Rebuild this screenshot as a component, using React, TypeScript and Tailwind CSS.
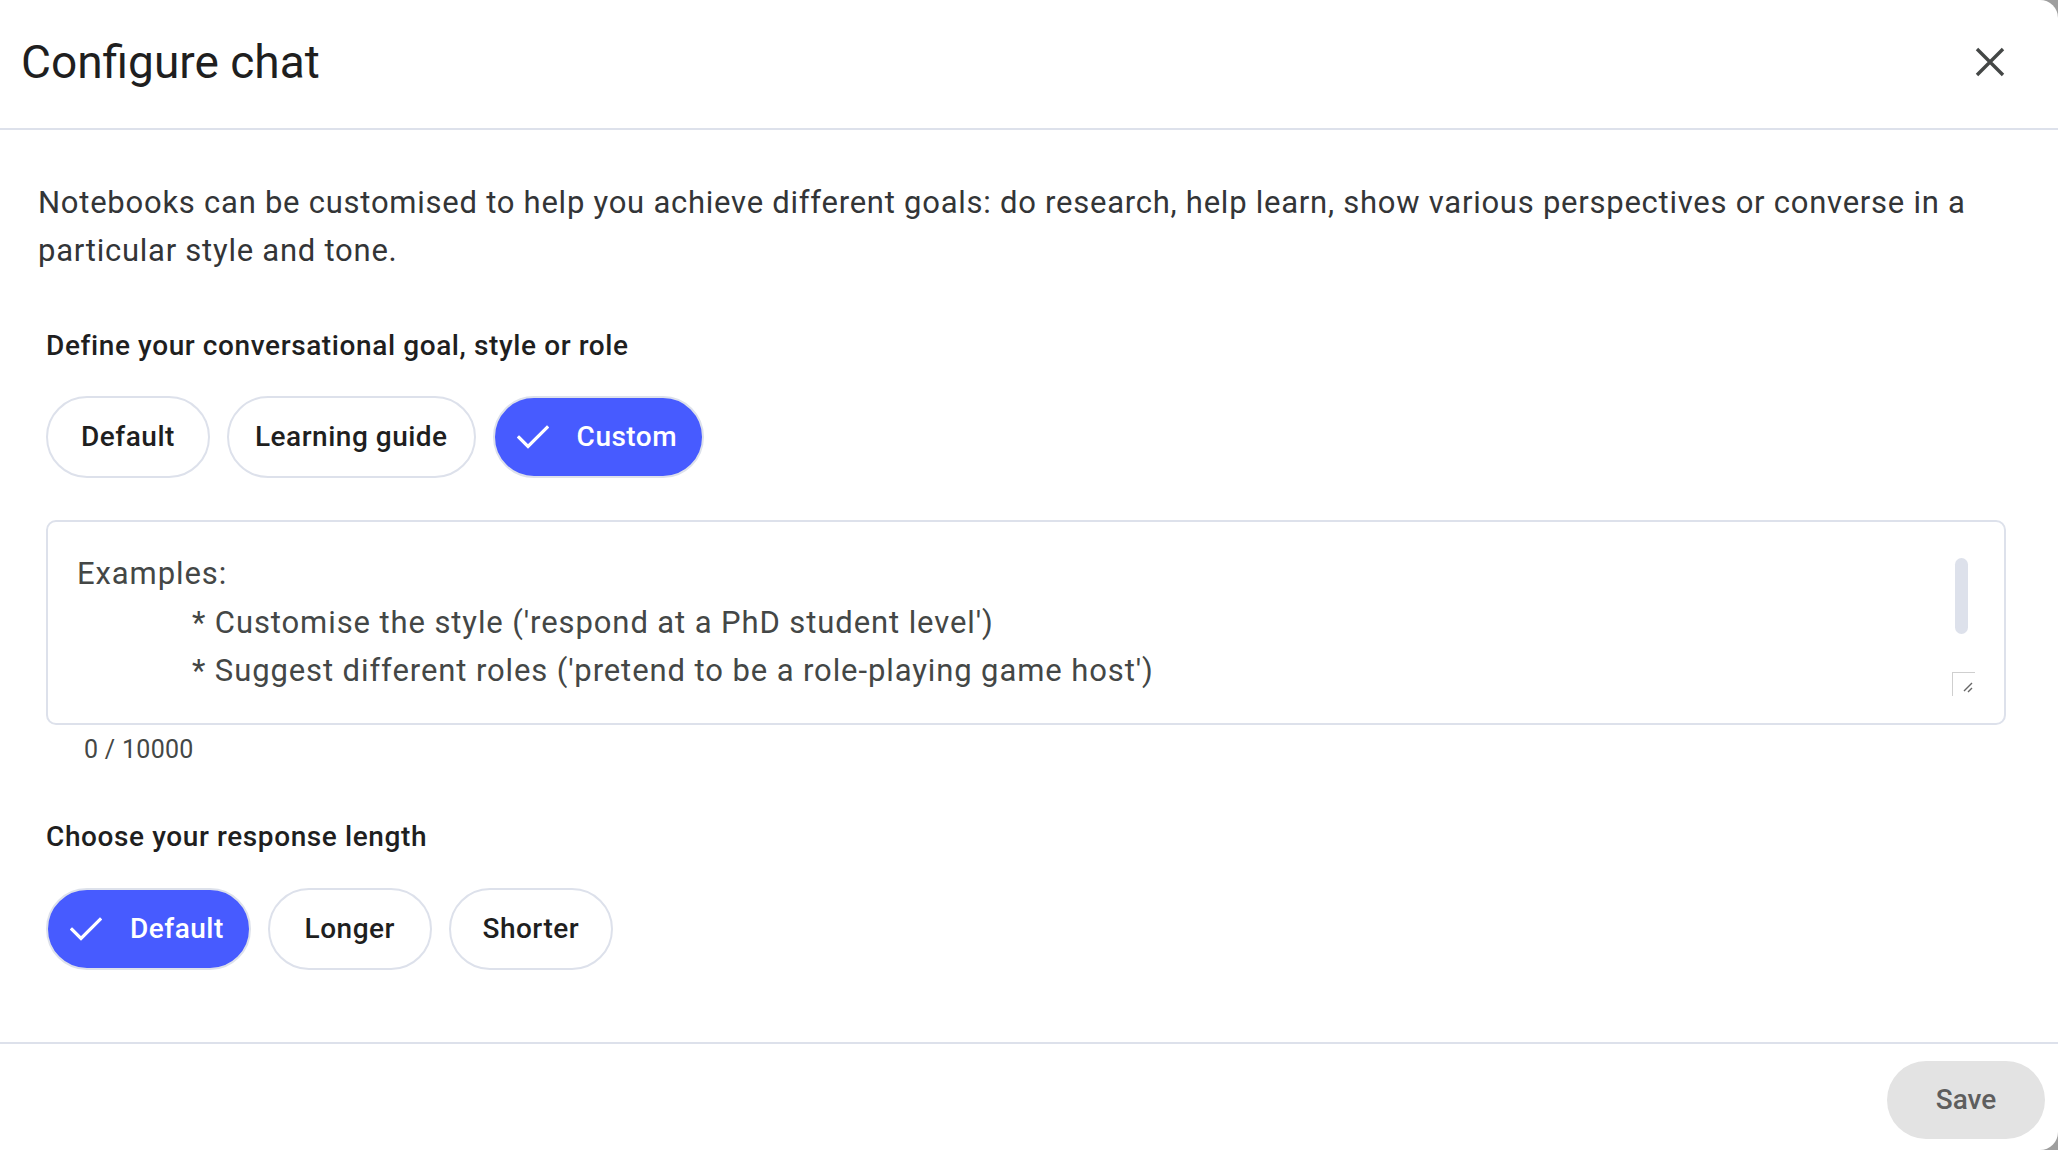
import React from "react";

// Configure chat dialog — full-viewport sheet with two chip groups and a prompt box

function CheckIcon() {
  return (
    <svg width="32" height="24" viewBox="0 0 32 24" fill="none">
      <path d="M2 12.5 L11 21.5 L30 2.5" stroke="white" strokeWidth="3.2" strokeLinecap="square" />
    </svg>
  );
}

function CloseIcon() {
  return (
    <svg width="30" height="30" viewBox="0 0 30 30" fill="none">
      <path d="M2 2 L28 28 M28 2 L2 28" stroke="#444746" strokeWidth="3.4" />
    </svg>
  );
}

interface ChipProps {
  label: string;
  selected?: boolean;
}

function Chip({ label, selected }: ChipProps) {
  if (selected) {
    return (
      <button className="flex h-[82px] items-center gap-[28px] rounded-full border-2 border-[#dde1eb] bg-[#475bff] pl-[22px] pr-[25px] text-[28px] font-medium tracking-[0.5px] text-white">
        <CheckIcon />
        <span>{label}</span>
      </button>
    );
  }
  return (
    <button className="flex h-[82px] min-w-[164px] items-center justify-center rounded-full border-2 border-[#dde1eb] bg-white px-[26px] text-[28px] font-medium tracking-[0.5px] text-[#1f1f1f]">
      {label}
    </button>
  );
}

export default function App() {
  const goals = [
    { label: "Default" },
    { label: "Learning guide" },
    { label: "Custom", selected: true },
  ];
  const lengths = [
    { label: "Default", selected: true },
    { label: "Longer" },
    { label: "Shorter" },
  ];

  return (
    <div className="h-[1150px] w-[2058px] overflow-hidden bg-[#9e9e9e] font-['Roboto',sans-serif]">
      <div className="flex h-[1150px] w-full flex-col rounded-r-[18px] bg-white">
        {/* header */}
        <div className="flex h-[130px] shrink-0 items-center justify-between border-b-2 border-[#dde1eb] pb-[4px] pl-[21px] pr-[48px]">
          <h1 className="text-[46px] font-normal leading-[56px] text-[#1f1f1f]">Configure chat</h1>
          <button className="flex h-[40px] w-[40px] items-center justify-center">
            <CloseIcon />
          </button>
        </div>

        {/* body */}
        <div className="pl-[46px] pr-[52px]">
          <p className="-ml-[8px] mt-[49px] pr-[10px] text-[31px] leading-[48px] tracking-[0.75px] text-[#333537]">
            Notebooks can be customised to help you achieve different goals: do research, help learn, show various
            perspectives or converse in a particular style and tone.
          </p>

          <h2 className="mt-[53px] text-[28px] font-medium leading-[36px] tracking-[0.6px] text-[#1f1f1f]">
            Define your conversational goal, style or role
          </h2>
          <div className="mt-[32px] flex gap-[17px]">
            {goals.map((g) => (
              <Chip key={g.label} label={g.label} selected={g.selected} />
            ))}
          </div>

          <div className="relative mt-[42px] h-[205px] rounded-[10px] border-2 border-[#dde1eb] pl-[29px] pt-[28px] text-[31px] leading-[48.5px] tracking-[0.9px] text-[#444746]">
            <div>Examples:</div>
            <div className="pl-[115px]">* Customise the style ('respond at a PhD student level')</div>
            <div className="pl-[115px]">* Suggest different roles ('pretend to be a role-playing game host')</div>
            <div className="absolute right-[36px] top-[36px] h-[76px] w-[13px] rounded-full bg-[#dde1eb]" />
            <div className="absolute right-[29px] top-[150px] h-[24px] w-[23px] border-l border-t border-[#cfcfcf]">
              <svg width="22" height="23" viewBox="0 0 22 23" className="absolute left-0 top-0">
                <path d="M11 18 L19 10 M15 19 L19 15" stroke="#666" strokeWidth="1.4" />
              </svg>
            </div>
          </div>
          <div className="mt-[9px] pl-[38px] text-[25px] leading-[32px] tracking-[0.3px] text-[#444746]">0 / 10000</div>

          <h2 className="mt-[53px] text-[28px] font-medium leading-[36px] tracking-[0.6px] text-[#1f1f1f]">
            Choose your response length
          </h2>
          <div className="mt-[33px] flex gap-[17px]">
            {lengths.map((l) => (
              <Chip key={l.label} label={l.label} selected={l.selected} />
            ))}
          </div>
        </div>

        {/* footer */}
        <div className="mt-auto flex h-[108px] shrink-0 justify-end border-t-2 border-[#dde1eb] pr-[13px] pt-[17px]">
          <button className="h-[78px] w-[158px] rounded-full bg-[#e3e3e3] text-[28px] font-medium text-[#5e5e5e]">
            Save
          </button>
        </div>
      </div>
    </div>
  );
}
